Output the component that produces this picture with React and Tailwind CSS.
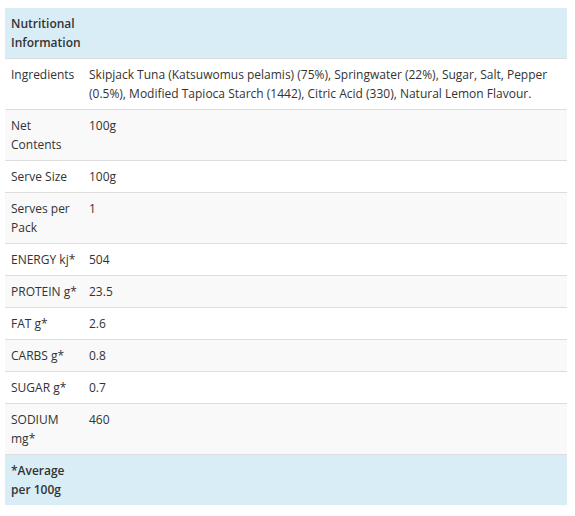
const rows = [
  ["Ingredients", "Skipjack Tuna (Katsuwomus pelamis) (75%), Springwater (22%), Sugar, Salt, Pepper (0.5%), Modified Tapioca Starch (1442), Citric Acid (330), Natural Lemon Flavour."],
  ["Net Contents", "100g"],
  ["Serve Size", "100g"],
  ["Serves per Pack", "1"],
  ["ENERGY kj*", "504"],
  ["PROTEIN g*", "23.5"],
  ["FAT g*", "2.6"],
  ["CARBS g*", "0.8"],
  ["SUGAR g*", "0.7"],
  ["SODIUM mg*", "460"],
]

export default function App() {
  return (
    <div className="bg-white w-[575px] h-[516px] pt-2 px-[5px] font-['Open_Sans',sans-serif] text-[12px] leading-[19px] text-[#333]">
      <table className="w-[562px] border-collapse table-fixed">
        <colgroup>
          <col className="w-[78px]" />
          <col />
        </colgroup>
        <tbody>
          <tr className="bg-[#d9edf7]">
            <td className="px-[6px] py-[6px] font-semibold align-top">Nutritional Information</td>
            <td className="px-[6px] py-[6px]"></td>
          </tr>
          {rows.map(([label, value], i) => (
            <tr key={label} className={i % 2 === 1 ? "bg-[#f9f9f9]" : "bg-white"}>
              <td className="px-[6px] py-[6px] border-t border-[#ddd] align-top">{label}</td>
              <td className="px-[6px] py-[6px] border-t border-[#ddd] align-top">{value}</td>
            </tr>
          ))}
          <tr className="bg-[#d9edf7]">
            <td className="px-[6px] py-[6px] border-t border-[#ddd] font-semibold align-top">*Average per 100g</td>
            <td className="px-[6px] py-[6px] border-t border-[#ddd]"></td>
          </tr>
        </tbody>
      </table>
    </div>
  )
}
